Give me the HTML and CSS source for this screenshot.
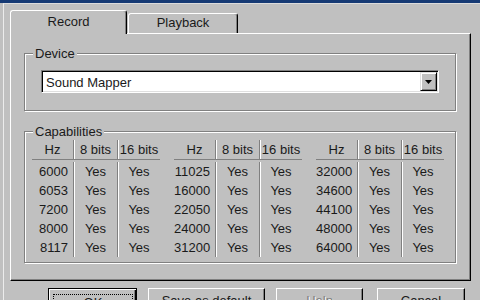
FILE: index.html
```html
<!DOCTYPE html>
<html lang="en">
<head>
  <meta charset="UTF-8" />
  <title>Audio Properties</title>
  <link rel="stylesheet" href="styles.css">
</head>
<body>

  <div class="titlebar"></div>

  <div class="window">
    <div class="tabs">
      <div class="tab active">Record</div>
      <div class="tab">Playback</div>
    </div>

    <div class="panel">
      <fieldset class="group">
        <legend>Device</legend>
        <div class="device-body">
          <div class="combo">
            <span class="combo-text">Sound Mapper</span>
            <span class="combo-btn">
              <svg width="7" height="4" viewBox="0 0 7 4"><path d="M0 0h7L3.5 4z" fill="#000"/></svg>
            </span>
          </div>
        </div>
      </fieldset>

      <fieldset class="group caps">
        <legend>Capabilities</legend>
        <div class="caps-body">
          <div class="rates">
            <div class="col hz">
              <div class="th">Hz</div>
              <div class="td">6000</div><div class="td">6053</div><div class="td">7200</div><div class="td">8000</div><div class="td">8117</div>
            </div>
            <div class="col bits8">
              <div class="th">8 bits</div>
              <div class="td">Yes</div><div class="td">Yes</div><div class="td">Yes</div><div class="td">Yes</div><div class="td">Yes</div>
            </div>
            <div class="col bits16">
              <div class="th">16 bits</div>
              <div class="td">Yes</div><div class="td">Yes</div><div class="td">Yes</div><div class="td">Yes</div><div class="td">Yes</div>
            </div>
          </div>
          <div class="rates">
            <div class="col hz">
              <div class="th">Hz</div>
              <div class="td">11025</div><div class="td">16000</div><div class="td">22050</div><div class="td">24000</div><div class="td">31200</div>
            </div>
            <div class="col bits8">
              <div class="th">8 bits</div>
              <div class="td">Yes</div><div class="td">Yes</div><div class="td">Yes</div><div class="td">Yes</div><div class="td">Yes</div>
            </div>
            <div class="col bits16">
              <div class="th">16 bits</div>
              <div class="td">Yes</div><div class="td">Yes</div><div class="td">Yes</div><div class="td">Yes</div><div class="td">Yes</div>
            </div>
          </div>
          <div class="rates">
            <div class="col hz">
              <div class="th">Hz</div>
              <div class="td">32000</div><div class="td">34600</div><div class="td">44100</div><div class="td">48000</div><div class="td">64000</div>
            </div>
            <div class="col bits8">
              <div class="th">8 bits</div>
              <div class="td">Yes</div><div class="td">Yes</div><div class="td">Yes</div><div class="td">Yes</div><div class="td">Yes</div>
            </div>
            <div class="col bits16">
              <div class="th">16 bits</div>
              <div class="td">Yes</div><div class="td">Yes</div><div class="td">Yes</div><div class="td">Yes</div><div class="td">Yes</div>
            </div>
          </div>
        </div>
      </fieldset>
    </div>

    <div class="buttons">
      <div class="btn btn-ok default"><span class="focus">OK</span></div>
      <div class="btn btn-save">Save as default</div>
      <div class="btn btn-help disabled">Help</div>
      <div class="btn btn-cancel">Cancel</div>
    </div>
  </div>

</body>
</html>
```

FILE: styles.css
```css
body {
  margin: 0;
  width: 480px;
  height: 300px;
  overflow: hidden;
  background: #c0c0c0;
  font-family: "Liberation Sans", Arial, sans-serif;
  font-size: 13px;
  color: #1a1a1a;
}

.titlebar {
  height: 3px;
  background: #163a74;
}

.window {
  margin-left: 3px;
  border-left: 1px solid #ececec;
  border-top: 1px solid #dcdcdc;
  padding: 6px 0 0 6px;
}

/* tabs */
.tabs {
  display: flex;
  align-items: flex-end;
  height: 23px;
}

.tab {
  box-sizing: border-box;
  width: 110px;
  height: 20px;
  margin-left: 1px;
  line-height: 18px;
  text-align: center;
  border: 1px solid #fff;
  border-bottom: 0;
  border-right-color: #000;
  border-radius: 3px 3px 0 0;
  box-shadow: inset -1px 0 #808080;
}

.tab.active {
  width: 117px;
  height: 24px;
  margin-left: 0;
  margin-bottom: -1px;
  line-height: 21px;
  position: relative;
  z-index: 1;
  background: #c0c0c0;
}

/* panel */
.panel {
  box-sizing: border-box;
  width: 461px;
  height: 248px;
  border: 1px solid;
  border-color: #fff #000 #000 #fff;
  box-shadow: inset -1px -1px #808080;
  padding: 12px 14px 0 13px;
}

.group {
  margin: 0;
  padding: 0;
  min-width: 0;
  border: 1px solid #808080;
  box-shadow: inset 1px 1px #fff, 1px 1px #fff;
}

.group legend {
  margin-left: 8px;
  padding: 0 2px;
  line-height: 15px;
  background: #c0c0c0;
}

.device-body {
  padding: 9px 16px 17px 16px;
}

.combo {
  display: flex;
  box-sizing: border-box;
  height: 23px;
  padding: 1px;
  border: 1px solid;
  border-color: #808080 #fff #fff #808080;
  box-shadow: inset 1px 1px #000, inset -1px -1px #dfdfdf;
  background: #fff;
}

.combo-text {
  flex: 1;
  line-height: 21px;
  padding-left: 3px;
}

.combo-btn {
  box-sizing: border-box;
  width: 17px;
  display: flex;
  align-items: center;
  justify-content: center;
  background: #c0c0c0;
  border: 1px solid;
  border-color: #dfdfdf #000 #000 #dfdfdf;
  box-shadow: inset 1px 1px #fff, inset -1px -1px #808080;
}

.combo-btn svg {
  display: block;
}

/* capabilities table */
.caps {
  margin-top: 13px;
}

.caps-body {
  display: flex;
  gap: 14px;
  padding: 1px 0 5px 7px;
}

.rates {
  display: flex;
}

.col {
  box-sizing: border-box;
  width: 42px;
}

.col.bits8 {
  width: 44px;
}

.th {
  line-height: 19px;
  text-align: center;
  border-bottom: 1px solid #808080;
  margin-bottom: 2px;
}

.td {
  line-height: 19px;
  text-align: center;
}

.hz .td {
  text-align: right;
  padding-right: 5px;
}

.col:not(.bits16) .th,
.col:not(.bits16) .td {
  border-right: 1px solid #808080;
  box-shadow: 1px 0 #fff;
}

/* buttons */
.buttons {
  display: flex;
  gap: 11px;
  margin-top: 7px;
  padding-left: 38px;
}

.btn {
  box-sizing: border-box;
  height: 24px;
  padding-top: 4px;
  line-height: 15px;
  text-align: center;
  border: 1px solid;
  border-color: #fff #000 #000 #fff;
  box-shadow: inset -1px -1px #808080;
}

.btn-ok { width: 89px; }
.btn-save { width: 117px; }
.btn-help { width: 87px; }
.btn-cancel { width: 88px; margin-left: 3px; }

.btn.default {
  border-color: #000;
  box-shadow: inset 1px 1px #fff, inset -1px -1px #000, inset -2px -2px #808080;
  padding: 5px 3px 0 4px;
}

.focus {
  display: block;
  border: 1px dotted #000;
  line-height: 15px;
}

.btn.disabled {
  color: #808080;
  text-shadow: 1px 1px #fff;
}
```
